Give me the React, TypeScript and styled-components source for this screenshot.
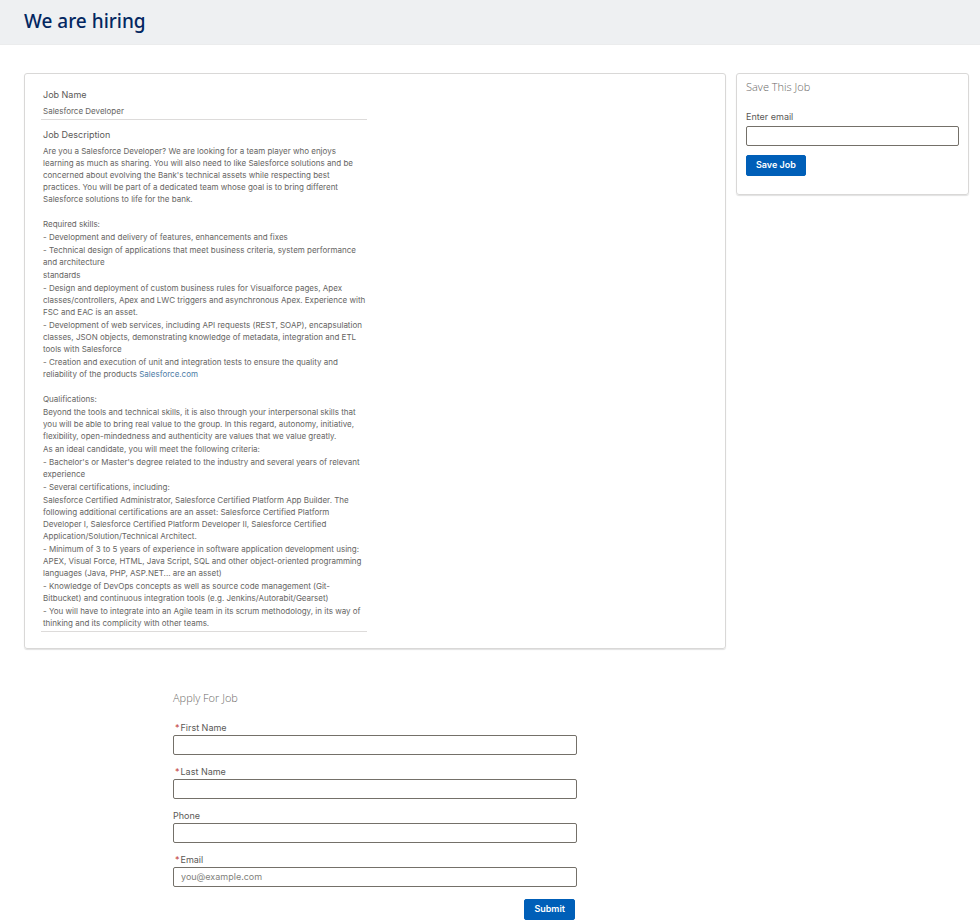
import React from "react";
import styled, { createGlobalStyle } from "styled-components";

const GlobalStyle = createGlobalStyle`
  *, *::before, *::after { box-sizing: border-box; }
  body {
    margin: 0;
    background: #ffffff;
    color: #666563;
    font-family: Inter, "Noto Sans", sans-serif;
    font-size: 8px;
    line-height: 12px;
  }
`;

const PageHeader = styled.header`
  padding: 8px 24px 10px;
  background: #eef0f2;
  border-bottom: 1px solid #ebeced;
`;

const PageTitle = styled.h1`
  margin: 0;
  color: #032761;
  font-family: "Noto Sans", "Open Sans", sans-serif;
  font-size: 19px;
  font-weight: 500;
  line-height: 26px;
`;

const Layout = styled.main`
  display: grid;
  grid-template-columns: minmax(0, 1fr) 233px;
  gap: 10px;
  align-items: start;
  padding: 28px 11px 0 24px;
`;

const Card = styled.section`
  border: 1px solid #d9d8d7;
  border-radius: 3px;
  box-shadow: 0 1px 1px rgba(0, 0, 0, 0.12);
`;

const JobCard = styled(Card)`
  display: grid;
  grid-template-columns: repeat(2, minmax(0, 1fr));
  gap: 16px;
  padding: 14px 16px 16px;
`;

const Details = styled.dl`
  display: flex;
  flex-direction: column;
  gap: 8px;
  margin: 0;
`;

const Detail = styled.div`
  padding: 0 0 2px 2px;
  border-bottom: 1px solid #dddbda;
`;

const DetailLabel = styled.dt`
  margin-bottom: 3px;
  color: #5a5957;
  font-size: 9px;
  line-height: 14px;
`;

const DetailValue = styled.dd`
  display: flex;
  flex-direction: column;
  gap: 13px;
  margin: 0;
`;

const TextBlock = styled.div`
  display: flex;
  flex-direction: column;
  gap: 1px;
`;

const Paragraph = styled.p`
  margin: 0;
  white-space: pre-line;
`;

const TextLink = styled.a`
  color: #4c7ba6;
  text-decoration: none;
`;

const SaveCard = styled(Card)`
  padding: 5px 9px 18px;
`;

const PanelTitle = styled.h2`
  margin: 0 0 15px;
  color: #6b6967;
  font-family: "Open Sans", "Noto Sans", sans-serif;
  font-size: 11px;
  font-weight: 300;
  line-height: 16px;
`;

const FieldLabel = styled.label`
  display: block;
  color: #5a5957;
  font-size: 9px;
  line-height: 14px;
`;

const Required = styled.abbr`
  margin: 0 1px 0 2px;
  color: #c23934;
  text-decoration: none;
`;

const TextInput = styled.input`
  display: block;
  width: 100%;
  height: 20px;
  padding: 0 7px 1px;
  border: 1px solid #747069;
  border-radius: 2px;
  background: #ffffff;
  color: #3e3e3c;
  font-family: inherit;
  font-size: 9px;
  line-height: 16px;

  &::placeholder {
    color: #817f7c;
    opacity: 1;
  }
`;

const BrandButton = styled.button`
  height: 21px;
  padding: 0 9px 1px;
  border: 1px solid #005fb8;
  border-radius: 2px;
  background: #005fb8;
  color: #ffffff;
  font-family: inherit;
  font-size: 9px;
  font-weight: 600;
  line-height: 18px;
  cursor: pointer;
`;

const SaveForm = styled.form`
  display: flex;
  flex-direction: column;
  align-items: flex-start;
  gap: 9px;
`;

const Field = styled.div`
  width: 100%;
`;

const SaveField = styled(Field)`
  display: flex;
  flex-direction: column;
  gap: 2px;
`;

const ApplySection = styled.section`
  width: 100%;
  max-width: 404px;
  margin: 41px auto 0;
`;

const ApplyForm = styled.form`
  display: flex;
  flex-direction: column;
  gap: 10px;
`;

const Actions = styled.div`
  display: flex;
  justify-content: flex-end;
  padding: 2px 2px 0 0;
`;

type Line = string | { text: string; link: string };

const description: Line[][] = [
  [
    `Are you a Salesforce Developer? We are looking for a team player who enjoys
learning as much as sharing. You will also need to like Salesforce solutions and be
concerned about evolving the Bank's technical assets while respecting best
practices. You will be part of a dedicated team whose goal is to bring different
Salesforce solutions to life for the bank.`,
  ],
  [
    "Required skills:",
    "- Development and delivery of features, enhancements and fixes",
    `- Technical design of applications that meet business criteria, system performance
and architecture`,
    "standards",
    `- Design and deployment of custom business rules for Visualforce pages, Apex
classes/controllers, Apex and LWC triggers and asynchronous Apex. Experience with
FSC and EAC is an asset.`,
    `- Development of web services, including API requests (REST, SOAP), encapsulation
classes, JSON objects, demonstrating knowledge of metadata, integration and ETL
tools with Salesforce`,
    {
      text: `- Creation and execution of unit and integration tests to ensure the quality and
reliability of the products `,
      link: "Salesforce.com",
    },
  ],
  [
    "Qualifications:",
    `Beyond the tools and technical skills, it is also through your interpersonal skills that
you will be able to bring real value to the group. In this regard, autonomy, initiative,
flexibility, open-mindedness and authenticity are values that we value greatly.`,
    "As an ideal candidate, you will meet the following criteria:",
    `- Bachelor's or Master's degree related to the industry and several years of relevant
experience`,
    "- Several certifications, including:",
    `Salesforce Certified Administrator, Salesforce Certified Platform App Builder. The
following additional certifications are an asset: Salesforce Certified Platform
Developer I, Salesforce Certified Platform Developer II, Salesforce Certified
Application/Solution/Technical Architect.`,
    `- Minimum of 3 to 5 years of experience in software application development using:
APEX, Visual Force, HTML, Java Script, SQL and other object-oriented programming
languages (Java, PHP, ASP.NET... are an asset)`,
    `- Knowledge of DevOps concepts as well as source code management (Git-
Bitbucket) and continuous integration tools (e.g. Jenkins/Autorabit/Gearset)`,
    `- You will have to integrate into an Agile team in its scrum methodology, in its way of
thinking and its complicity with other teams.`,
  ],
];

const applyFields = [
  { id: "firstName", label: "First Name", type: "text", required: true },
  { id: "lastName", label: "Last Name", type: "text", required: true },
  { id: "phone", label: "Phone", type: "tel", required: false },
  { id: "email", label: "Email", type: "email", required: true, placeholder: "you@example.com" },
];

const stopSubmit = (event: React.FormEvent) => event.preventDefault();

export default function App() {
  return (
    <>
      <GlobalStyle />
      <PageHeader>
        <PageTitle>We are hiring</PageTitle>
      </PageHeader>
      <Layout>
        <div>
          <JobCard>
            <Details>
              <Detail>
                <DetailLabel>Job Name</DetailLabel>
                <DetailValue>Salesforce Developer</DetailValue>
              </Detail>
              <Detail>
                <DetailLabel>Job Description</DetailLabel>
                <DetailValue>
                  {description.map((block, i) => (
                    <TextBlock key={i}>
                      {block.map((line, j) =>
                        typeof line === "string" ? (
                          <Paragraph key={j}>{line}</Paragraph>
                        ) : (
                          <Paragraph key={j}>
                            {line.text}
                            <TextLink href="#salesforce">{line.link}</TextLink>
                          </Paragraph>
                        )
                      )}
                    </TextBlock>
                  ))}
                </DetailValue>
              </Detail>
            </Details>
          </JobCard>
          <ApplySection>
            <PanelTitle>Apply For Job</PanelTitle>
            <ApplyForm onSubmit={stopSubmit} noValidate>
              {applyFields.map((field) => (
                <Field key={field.id}>
                  <FieldLabel htmlFor={field.id}>
                    {field.required && <Required>*</Required>}
                    {field.label}
                  </FieldLabel>
                  <TextInput
                    id={field.id}
                    name={field.id}
                    type={field.type}
                    required={field.required}
                    placeholder={field.placeholder}
                  />
                </Field>
              ))}
              <Actions>
                <BrandButton type="submit">Submit</BrandButton>
              </Actions>
            </ApplyForm>
          </ApplySection>
        </div>
        <SaveCard>
          <PanelTitle>Save This Job</PanelTitle>
          <SaveForm onSubmit={stopSubmit} noValidate>
            <SaveField>
              <FieldLabel htmlFor="saveEmail">Enter email</FieldLabel>
              <TextInput id="saveEmail" name="saveEmail" type="email" />
            </SaveField>
            <BrandButton type="submit">Save Job</BrandButton>
          </SaveForm>
        </SaveCard>
      </Layout>
    </>
  );
}
